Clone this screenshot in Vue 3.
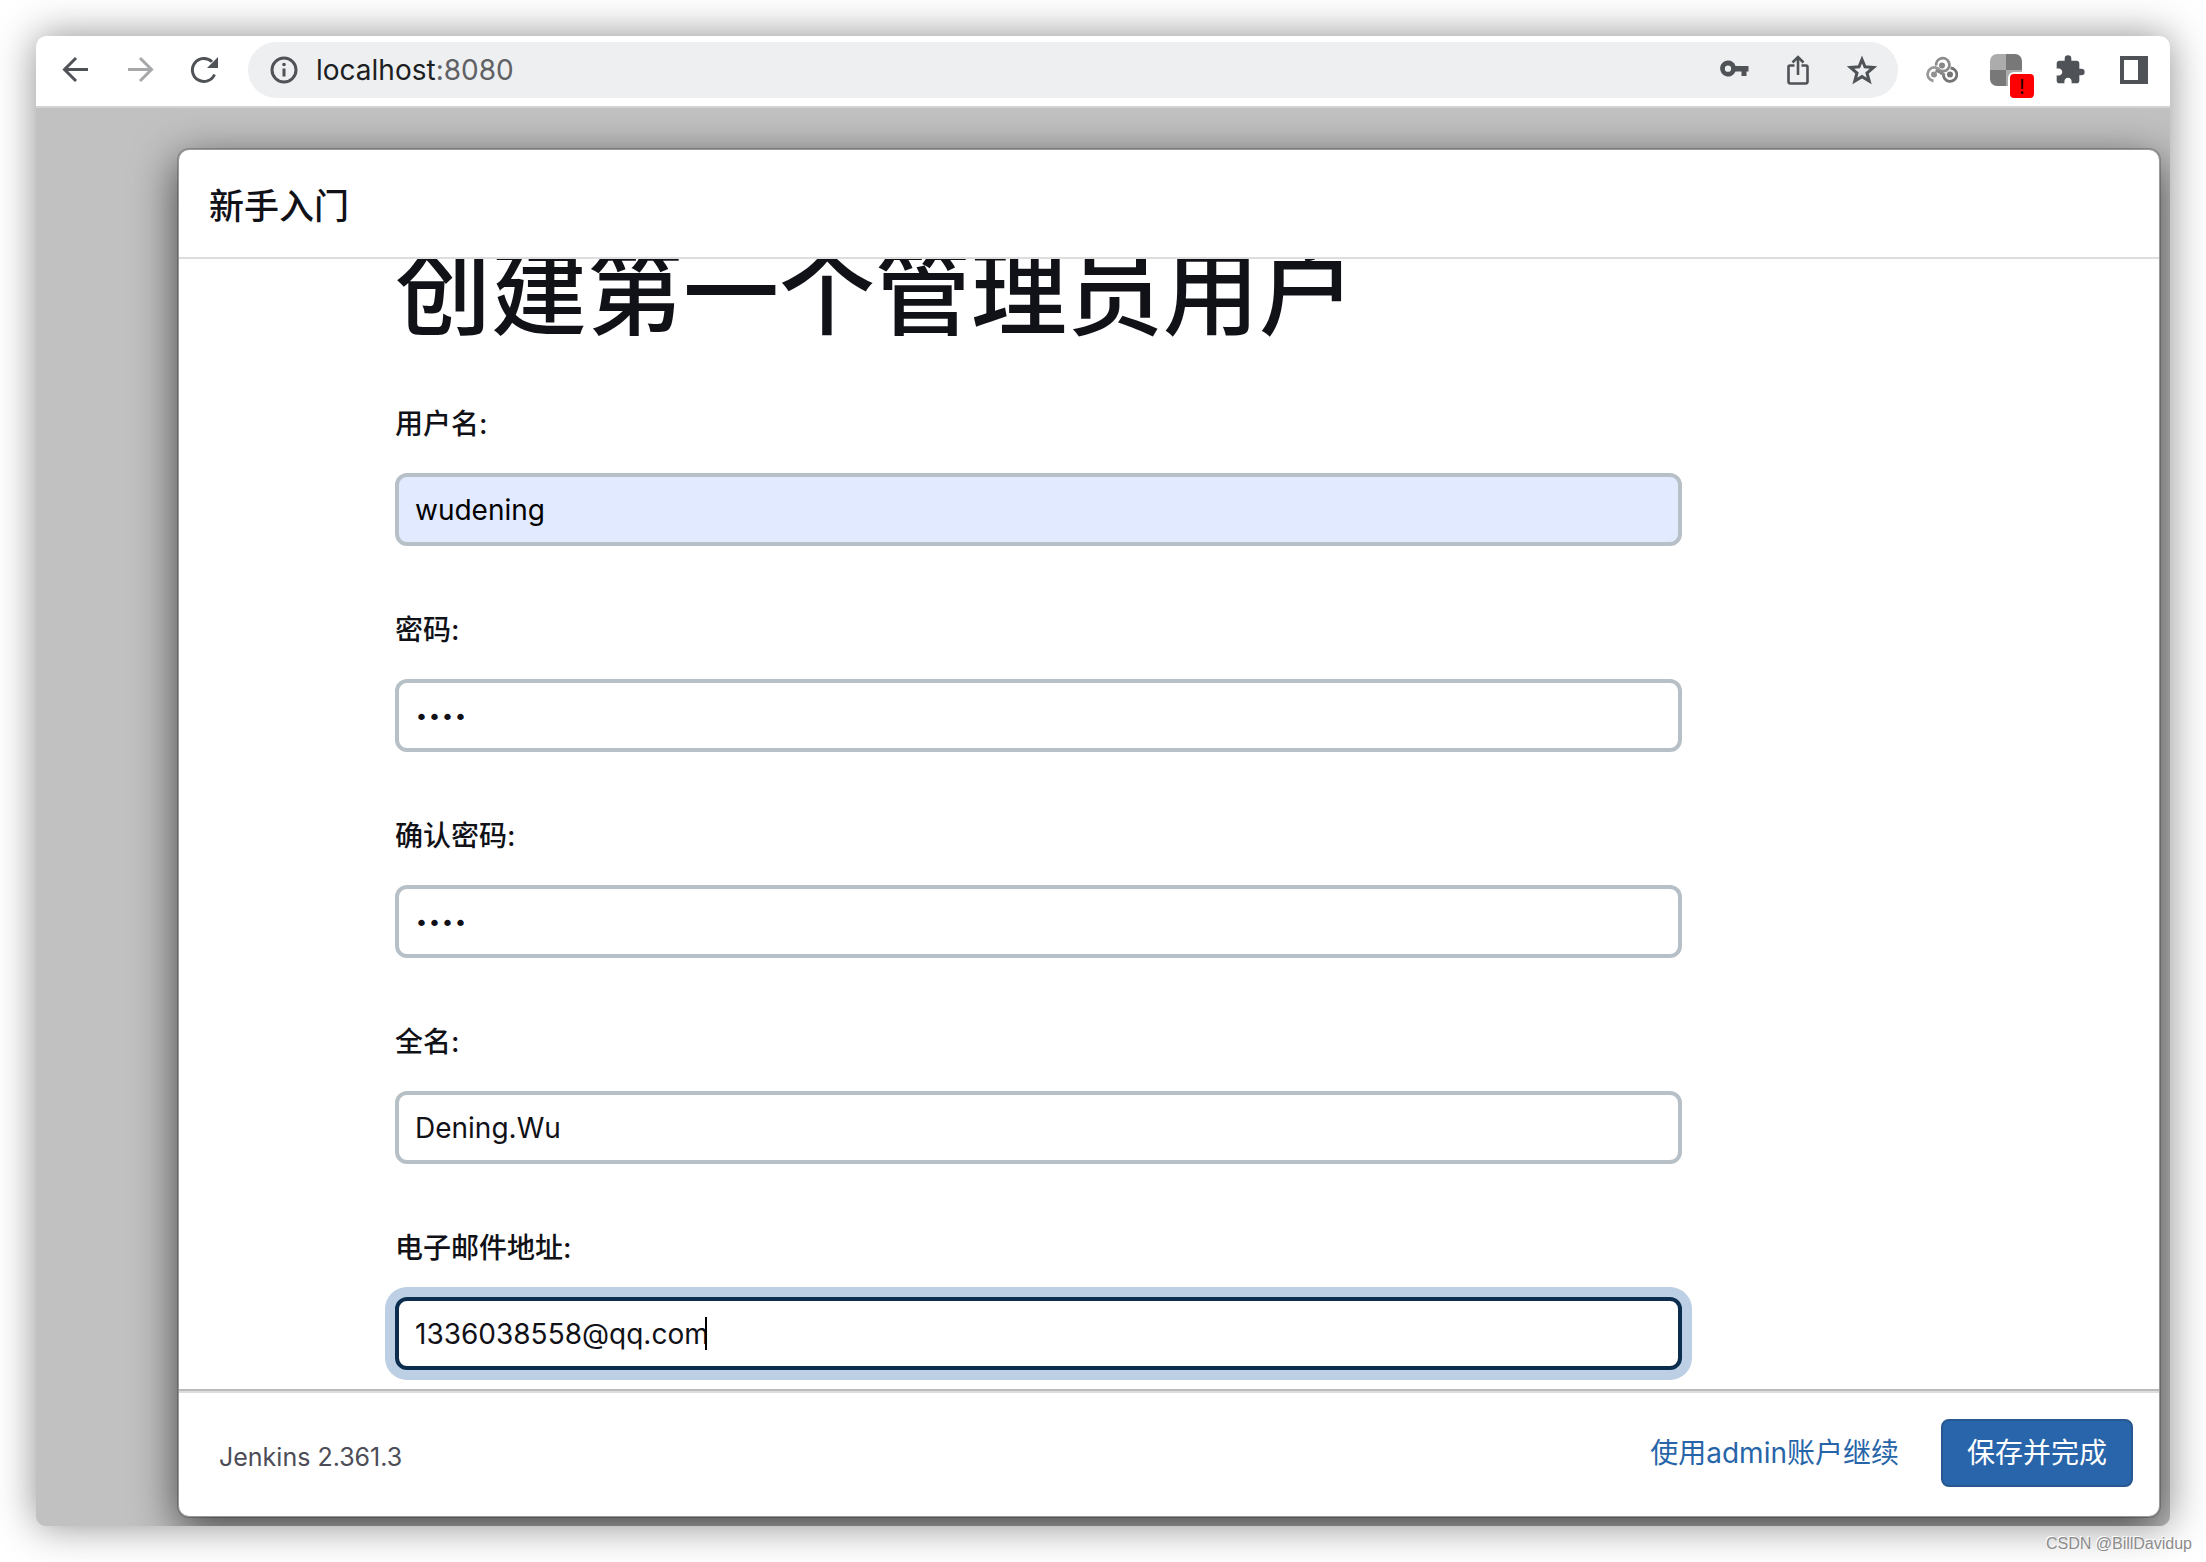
<script setup>
const fields = [
  { id: 'username', label: '用户名:', type: 'text', value: 'wudening', state: 'autofilled' },
  { id: 'password', label: '密码:', type: 'password', value: 'wdn1', state: '' },
  { id: 'confirm', label: '确认密码:', type: 'password', value: 'wdn1', state: '' },
  { id: 'fullname', label: '全名:', type: 'text', value: 'Dening.Wu', state: '' },
  { id: 'email', label: '电子邮件地址:', type: 'text', value: '1336038558@qq.com', state: 'focused' },
]
</script>

<template>
  <div class="desktop">
    <div class="window">
      <header class="toolbar">
        <nav class="group">
          <button class="icon" aria-label="Back">
            <svg viewBox="0 0 32 32"><path d="M28 15.500H5M16 4 4.500 15.500 16 27" class="line" /></svg>
          </button>
          <button class="icon faded" aria-label="Forward">
            <svg viewBox="0 0 32 32"><path d="M4 15.500H27M16 4 27.500 15.500 16 27" class="line" /></svg>
          </button>
          <button class="icon" aria-label="Reload">
            <svg viewBox="0 0 32 32">
              <path d="M26.500 20.500A11.500 11.500 0 1 1 24 7.800" class="line" />
              <path d="M30 3V14H19Z" class="solid" />
            </svg>
          </button>
        </nav>
        <div class="omnibox">
          <button class="icon" aria-label="Site information">
            <svg viewBox="0 0 32 32">
              <circle cx="16" cy="16" r="12" class="line" />
              <path d="M16 14.500V22.500" class="line" />
              <circle cx="16" cy="10.500" r="1.800" class="solid" />
            </svg>
          </button>
          <span class="url">localhost<span class="port">:8080</span></span>
          <div class="group">
            <button class="icon" aria-label="Passwords">
              <svg viewBox="0 0 32 32">
                <path fill-rule="evenodd" class="solid" d="M10 6.500A8 8 0 1 0 17.500 17.500H23.500V22H28.500V17.500H30.500V12H17.500A8 8 0 0 0 10 6.500ZM10 11.500A3 3 0 1 1 10 17.800A3 3 0 0 1 10 11.500Z" />
              </svg>
            </button>
            <button class="icon" aria-label="Share">
              <svg viewBox="0 0 32 32">
                <path d="M12.500 11.500H8Q6.500 11.500 6.500 13V27.500Q6.500 29.500 8.500 29.500H23.500Q25.500 29.500 25.500 27.500V13Q25.500 11.500 24 11.500H19.500M16 21V4M10.500 8.500 16 3 21.500 8.500" class="line thin" />
              </svg>
            </button>
            <button class="icon" aria-label="Bookmark">
              <svg viewBox="0 0 32 32">
                <path class="line" d="M16 5.500 19 12.800 27.500 13.500 21 19 23.200 27 16 22.600 8.800 27 11 19 4.500 13.500 13 12.800Z" />
              </svg>
            </button>
          </div>
        </div>
        <div class="group">
          <button class="icon" aria-label="Cloud extension">
            <svg viewBox="0 0 32 32" fill="none" stroke-width="2.800">
              <path d="M10.200 11.500A6.600 6.600 0 1 1 20 16.500Q17.500 17.800 15 16.500" stroke="#8c8c8c" />
              <path d="M7.500 27A6.800 6.800 0 1 1 15.200 20.500" stroke="#999" />
              <path d="M17.500 19.500A6.700 6.700 0 1 0 24.500 14" stroke="#747474" />
              <path d="M9.500 16.500Q15 17.500 18.500 21.500" stroke="#868686" />
              <circle cx="16" cy="11.500" r="3" fill="#888" />
              <circle cx="8" cy="20.500" r="3" fill="#919191" />
              <circle cx="24" cy="20.500" r="3" fill="#747474" />
            </svg>
          </button>
          <button class="icon" aria-label="Blocked extension">
            <svg viewBox="0 0 32 32">
              <path d="M7 0H16V16H0V7A7 7 0 0 1 7 0Z" fill="#acacac" />
              <path d="M16 0H25A7 7 0 0 1 32 7V16H16Z" fill="#787878" />
              <path d="M0 16H16V32H7A7 7 0 0 1 0 25Z" fill="#787878" />
              <path d="M16 16H32V25A7 7 0 0 1 25 32H16Z" fill="#acacac" />
            </svg>
            <span class="badge">!</span>
          </button>
          <button class="icon" aria-label="Extensions">
            <svg viewBox="0 0 24 24">
              <path class="solid" d="M20.500 11H19V7c0-1.100-.9-2-2-2h-4V3.500a2.500 2.500 0 0 0-5 0V5H4c-1.100 0-1.990.9-1.990 2v3.800H3.500c1.490 0 2.700 1.210 2.700 2.700s-1.210 2.700-2.700 2.700H2V20c0 1.100.9 2 2 2h3.800v-1.500c0-1.490 1.210-2.700 2.700-2.700s2.700 1.210 2.700 2.700V22H17c1.100 0 2-.9 2-2v-4h1.500a2.500 2.500 0 0 0 0-5z" />
            </svg>
          </button>
          <button class="icon" aria-label="Side panel">
            <svg viewBox="0 0 32 32">
              <path fill-rule="evenodd" class="solid" d="M2 2H30V30H2ZM6 6V26H20V6Z" />
            </svg>
          </button>
        </div>
      </header>

      <main class="backdrop">
        <section class="modal">
          <header class="modal-header"><h2>新手入门</h2></header>
          <div class="modal-body">
            <h1>创建第一个管理员用户</h1>
            <form id="admin-form" @submit.prevent>
              <div v-for="field in fields" :key="field.id" class="field">
                <label :for="field.id">{{ field.label }}</label>
                <div class="control">
                  <input :id="field.id" :type="field.type" :value="field.value" :class="field.state" autocomplete="off" />
                  <span v-if="field.state === 'focused'" class="caret"></span>
                </div>
              </div>
            </form>
          </div>
          <footer class="modal-footer">
            <span class="version">Jenkins 2.361.3</span>
            <a href="#">使用admin账户继续</a>
            <button class="primary" type="submit" form="admin-form">保存并完成</button>
          </footer>
        </section>
      </main>
    </div>
    <span class="watermark">CSDN @BillDavidup</span>
  </div>
</template>

<style>
body {
  background: #fff;
}
</style>

<style scoped>
* {
  box-sizing: border-box;
}

.desktop {
  position: relative;
  height: 100vh;
  padding: 36px;
  overflow: hidden;
  font-family: Inter, "Noto Sans CJK SC", sans-serif;
  font-size: 28px;
  line-height: 40px;
  color: #111118;
}

.window {
  display: flex;
  flex-direction: column;
  height: 100%;
  overflow: hidden;
  border-radius: 10px;
  background: #c1c1c1;
  box-shadow: 0 0 40px rgba(0, 0, 0, 0.45);
}

.toolbar {
  display: flex;
  align-items: center;
  gap: 28px;
  padding: 6px 20px 8px 24px;
  border-bottom: 2px solid #d2d3d4;
  background: #fff;
}

.group {
  display: flex;
  gap: 32px;
}

.icon {
  position: relative;
  width: 32px;
  height: 32px;
  padding: 0;
  border: 0;
  background: none;
  color: #4f5256;
}

.icon svg {
  display: block;
  width: 32px;
  height: 32px;
}

.faded {
  color: #a7a8aa;
}

.line {
  fill: none;
  stroke: currentColor;
  stroke-width: 3;
}

.thin {
  stroke-width: 2.6;
}

.solid {
  fill: currentColor;
}

.badge {
  position: absolute;
  top: 20px;
  left: 20px;
  width: 24px;
  height: 24px;
  border-radius: 4px;
  background: #fe0000;
  box-shadow: 0 0 0 2px #fff;
  color: #2a0000;
  font-family: Inter, sans-serif;
  font-size: 20px;
  line-height: 26px;
  text-align: center;
}

.omnibox {
  display: flex;
  flex: 1;
  align-items: center;
  gap: 16px;
  height: 56px;
  padding: 0 20px;
  border-radius: 28px;
  background: #eeeff1;
}

.url {
  flex: 1;
  color: #1d1e21;
}

.port {
  color: #5f6165;
}

.backdrop {
  display: flex;
  flex: 1;
  min-height: 0;
  padding: 40px 9px 8px 141px;
}

.modal {
  display: flex;
  flex: 1;
  flex-direction: column;
  min-width: 0;
  border: 2px solid rgba(0, 0, 0, 0.2);
  border-radius: 12px;
  background: #fff;
  background-clip: padding-box;
  box-shadow: 0 12px 44px rgba(0, 0, 0, 0.64);
}

.modal-header {
  padding: 33px 30px 27px;
  border-bottom: 2px solid #ddd;
}

h2 {
  margin: 0;
  font-size: 35px;
  font-weight: 500;
  line-height: 47px;
}

.modal-body {
  display: flex;
  flex: 1;
  flex-direction: column;
  justify-content: flex-end;
  min-height: 0;
  padding: 0 477px 19px 216px;
  overflow: hidden;
  border-bottom: 2px solid #bbb;
}

h1 {
  margin: 0 0 56px;
  font-size: 96px;
  font-weight: 500;
  line-height: 112px;
  white-space: nowrap;
}

form {
  display: flex;
  flex-direction: column;
  gap: 64px;
}

.field {
  display: flex;
  flex-direction: column;
  gap: 29px;
}

label {
  font-weight: 500;
}

.control {
  position: relative;
}

input {
  display: block;
  width: 100%;
  height: 73px;
  padding: 0 16px;
  border: 4px solid #b6c0c6;
  border-radius: 12px;
  outline: 0;
  background: #fff;
  color: #111118;
  font: inherit;
}

input[type="password"] {
  padding-top: 4px;
  font-family: "DejaVu Sans", sans-serif;
  font-size: 22px;
}

.autofilled {
  background: #e1eafe;
  color: #000;
}

.focused {
  border-color: #0b2e4f;
  box-shadow: 0 0 0 10px #bccfe4;
}

.caret {
  position: absolute;
  top: 20px;
  left: 310px;
  width: 2px;
  height: 33px;
  background: #000;
}

.modal-footer {
  display: flex;
  align-items: center;
  padding: 26px 26px 29px 40px;
  border-top: 2px solid #ddd;
}

.version {
  flex: 1;
  padding-top: 8px;
  color: #4d4d57;
  font-size: 25px;
}

a {
  margin-right: 42px;
  color: #2765a9;
  text-decoration: none;
}

.primary {
  height: 68px;
  padding: 0 24px;
  border: 2px solid #27588f;
  border-radius: 8px;
  background: #2965aa;
  color: #fff;
  font: inherit;
}

.watermark {
  position: absolute;
  right: 14px;
  bottom: 8px;
  color: #8c8c8c;
  font-family: "Liberation Sans", sans-serif;
  font-size: 16px;
  line-height: 20px;
  text-shadow: -1px -1px 0 #fff;
}
</style>
